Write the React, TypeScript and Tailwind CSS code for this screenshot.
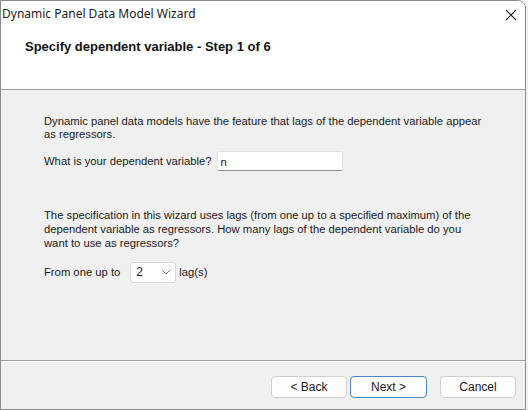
import React from "react";

export default function App() {
  return (
    <div className="w-[528px] h-[410px] bg-[#f0f0f0] overflow-hidden">
      <div className="w-[526px] h-[410px] border border-[#8c8c8c] rounded-tr-[8px] overflow-hidden flex flex-col bg-[#f0f0f0] text-black">
        {/* header */}
        <div className="h-[89px] shrink-0 bg-white border-b border-[#a0a0a0] flex flex-col">
          <div className="h-[26px] flex items-center justify-between pl-[1px] pr-[8px]">
            <span className="text-[12px] leading-[16px] text-[#1a1a1a]" style={{ fontFamily: '"Noto Sans", "Open Sans", sans-serif' }}>
              Dynamic Panel Data Model Wizard
            </span>
            <svg width="12" height="12" viewBox="0 0 12 12" className="mt-[2px]">
              <path d="M1 1 L11 11 M11 1 L1 11" stroke="#222" strokeWidth="1.1" fill="none" />
            </svg>
          </div>
          <div className="pl-[24px] mt-[6px]">
            <span className="text-[13px] leading-[16px] font-bold text-[#111]" style={{ fontFamily: '"Liberation Sans", Arial, sans-serif' }}>
              Specify dependent variable - Step 1 of 6
            </span>
          </div>
        </div>
        {/* body */}
        <div className="flex-1 flex flex-col text-[11.25px] text-[#1a1a1a]" style={{ fontFamily: '"Liberation Sans", Arial, sans-serif' }}>
          <div className="pl-[43px] pr-[20px] pt-[25px] flex flex-col">
            <p className="leading-[13px]">
              Dynamic panel data models have the feature that lags of the dependent variable appear
              <br />
              as regressors.
            </p>
            <div className="flex items-center mt-[10px] h-[20px]">
              <span>What is your dependent variable?</span>
              <div className="ml-[5px] w-[126px] h-[20px] bg-white border border-[#e3e3e3] border-b-[#8a8a8a] rounded-[2px] flex items-center pl-[3px] pt-[2px]">
                n
              </div>
            </div>
            <p className="leading-[14px] mt-[37px]">
              The specification in this wizard uses lags (from one up to a specified maximum) of the
              <br />
              dependent variable as regressors. How many lags of the dependent variable do you
              <br />
              want to use as regressors?
            </p>
            <div className="flex items-center mt-[12px] h-[20px]">
              <span>From one up to</span>
              <div className="ml-[10px] w-[46px] h-[21px] bg-white border border-[#d6d6d6] rounded-[3px] flex items-center justify-between pl-[5px] pr-[4px]">
                <span className="text-[12px]">2</span>
                <svg width="10" height="6" viewBox="0 0 10 6">
                  <path d="M1 1 L5 5 L9 1" stroke="#7a7a7a" strokeWidth="1" fill="none" />
                </svg>
              </div>
              <span className="ml-[3px]">lag(s)</span>
            </div>
          </div>
          <div className="flex-1" />
          <div className="h-[2px] border-t border-[#a0a0a0] bg-white shrink-0" />
          <div className="h-[47px] shrink-0 flex justify-end items-start pt-[14px] pr-[9px]">
            <button className="w-[76px] h-[22px] bg-[#fdfdfd] border border-[#d0d0d0] rounded-[4px] text-[12px] text-[#1a1a1a]">
              &lt; Back
            </button>
            <button className="ml-[3px] w-[77px] h-[22px] bg-[#fdfdfd] border border-[#4a86c5] rounded-[4px] text-[12px] text-[#1a1a1a]">
              Next &gt;
            </button>
            <button className="ml-[13px] w-[76px] h-[22px] bg-[#fdfdfd] border border-[#d0d0d0] rounded-[4px] text-[12px] text-[#1a1a1a]">
              Cancel
            </button>
          </div>
        </div>
      </div>
    </div>
  );
}
